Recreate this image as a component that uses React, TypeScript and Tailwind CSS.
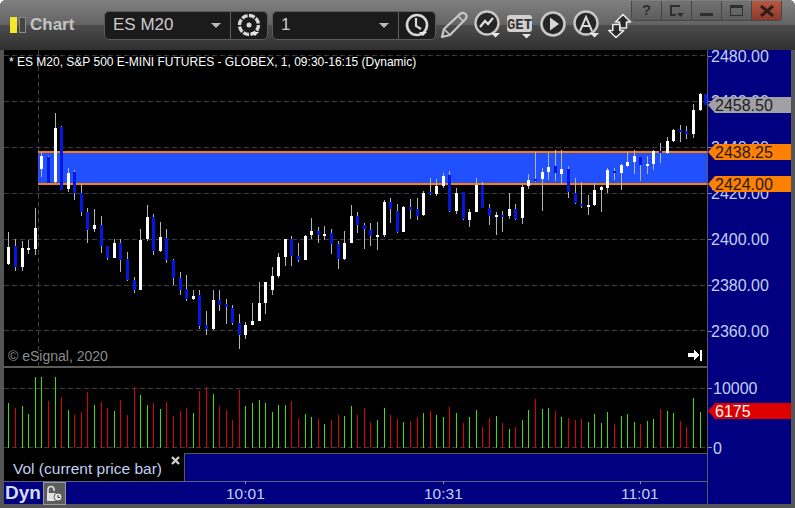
import type { ReactNode } from "react";

// candle rows read off the chart: x, wick top, body top, body bottom, wick bottom, white?
type Row = [number, number, number, number, number, number];

const left: Row[] = [
  [25,426,471,522,525,1],[46,447,468,531,543,0],[67,453,474,531,543,1],[85,450,474,480,492,1],[106,354,414,477,495,1],
  [124,186,198,237,261,1],[145,198,201,279,282,0],[166,69,114,276,279,1],[184,108,111,300,300,0],[205,234,249,297,306,1],
  [223,240,246,309,330,0],[244,282,309,366,378,0],[262,354,366,420,459,0],[283,357,405,417,426,1],[304,378,405,468,489,0],
  [322,468,468,504,510,0],[343,447,459,504,504,1],[361,447,459,510,546,0],[382,486,507,570,573,0],[403,561,570,600,609,0],
  [421,417,450,600,600,1],[442,345,381,447,453,1],[460,372,381,483,495,0],[481,396,441,483,486,1],[499,417,444,510,519,0],
  [520,507,510,564,585,0],[541,546,564,600,615,0],[559,555,597,627,633,0],[580,600,618,627,630,1],[598,600,615,708,717,0],
  [619,663,705,717,735,0],[640,600,630,717,720,1],[658,600,630,645,663,0],[679,627,642,651,702,0],[697,645,654,699,705,0],
  [718,672,699,735,777,0],[736,696,705,735,747,1],[757,639,693,705,705,1],[778,576,639,693,693,1],[796,576,576,639,672,1],
];

const middle: Row[] = [
  [7,531,558,600,615,1],[25,489,501,558,564,1],[46,447,447,501,528,1],[64,438,447,498,528,0],[85,459,498,510,516,0],
  [106,435,438,510,510,1],[124,384,423,435,447,1],[145,411,423,435,459,0],[163,408,432,438,450,1],[184,417,429,462,492,0],
  [205,453,462,507,537,0],[223,423,459,507,510,1],[244,345,378,459,459,1],[262,366,378,405,429,0],[283,399,405,417,477,0],
  [301,399,420,438,468,0],[322,396,435,441,480,1],[343,330,336,435,441,1],[361,324,336,357,399,0],[382,342,363,426,429,0],
  [400,348,351,426,426,1],[421,327,351,360,387,0],[442,324,357,378,390,0],[460,303,309,375,378,1],[481,264,306,312,315,0],
  [499,267,288,312,318,1],[520,249,258,288,294,1],[538,243,255,363,366,0],[559,294,309,363,372,1],[580,306,306,387,390,0],
  [598,357,366,390,411,1],[619,264,285,366,366,1],[637,276,285,354,354,0],[658,342,354,378,405,0],[679,366,375,381,435,1],
  [697,363,375,381,426,0],[718,309,357,378,387,1],[736,342,357,387,390,0],[757,285,291,384,402,1],[775,252,270,288,297,1],
  [796,186,267,273,276,0],
];

const right: Row[] = [
  [52,264,276,297,393,1],[70,219,261,276,300,1],[91,210,258,279,303,0],[109,210,267,282,312,1],[130,258,267,336,354,0],
  [151,294,339,369,372,0],[169,306,372,378,384,0],[190,345,375,381,405,1],[208,309,330,375,378,1],[229,318,321,330,396,1],
  [247,264,270,324,339,1],[268,264,273,279,300,0],[289,252,255,279,330,1],[307,216,246,258,261,1],[328,210,228,246,282,1],
  [346,231,231,255,303,0],[367,228,252,258,282,1],[385,210,213,252,270,1],[406,189,213,219,249,0],[427,171,183,219,222,1],
  [445,147,150,183,186,1],[466,135,150,156,186,0],[484,138,153,162,177,0],[505,72,90,162,174,1],[526,39,42,90,93,1],
  [541,42,42,75,75,0],
];

const candles = [
  ...left.map((r) => ({ r, ox: 0, oy: 90 })),
  ...middle.map((r) => ({ r, ox: 270, oy: 90 })),
  ...right.map((r) => ({ r, ox: 525, oy: 80 })),
];

// volume bars: x in zoom units, top, green?
const volLeft: [number, number, number][] = [
  [25,129,1],[46,144,0],[67,138,1],[85,162,1],[106,51,1],[124,51,1],[145,123,0],[166,51,1],[184,111,0],[205,150,1],
  [223,165,0],[244,156,0],[262,96,0],[283,135,1],[304,126,0],[322,144,0],[343,153,1],[361,120,0],[382,165,0],[403,81,0],
  [421,105,1],[442,135,1],[460,129,0],[481,147,1],[499,126,0],[520,168,0],[541,153,0],[559,144,0],[580,159,1],[598,93,0],
  [619,81,0],[640,102,1],[658,138,0],[679,150,0],[697,180,0],[718,90,0],[736,138,1],[757,129,1],[778,120,1],[796,129,1],
];
const volMiddle: [number, number, number][] = [
  [7,156,1],[25,135,1],[46,135,1],[64,123,0],[85,177,0],[106,162,1],[124,171,1],[145,177,0],[163,192,1],[184,180,0],
  [205,165,0],[223,168,1],[244,138,1],[262,165,0],[283,144,0],[301,186,0],[322,180,1],[343,144,1],[361,165,0],[382,177,0],
  [400,186,1],[421,183,0],[442,171,0],[460,159,1],[481,153,0],[499,165,1],[520,171,1],[538,141,0],[559,159,1],[580,189,0],
  [598,171,1],[619,150,1],[637,201,0],[658,174,0],[679,168,1],[697,189,0],[718,207,1],[736,201,0],[757,180,1],[775,150,1],
  [796,117,0],
];
const volRight: [number, number, number][] = [
  [52,207,1],[70,204,1],[91,213,0],[109,231,1],[130,234,0],[151,240,0],[169,237,0],[190,246,1],[208,222,1],[229,249,1],
  [247,216,1],[268,252,0],[289,228,1],[307,222,1],[328,246,1],[346,252,0],[367,243,1],[385,237,1],[406,207,0],[427,213,1],
  [445,219,1],[466,243,0],[484,261,0],[505,174,1],[526,216,1],
];

const volBars = [
  ...volLeft.map((v) => ({ x: Math.floor(v[0] / 3), top: 360 + v[1] / 3, up: v[2] })),
  ...volMiddle.map((v) => ({ x: Math.floor(270 + v[0] / 3), top: 360 + v[1] / 3, up: v[2] })),
  ...volRight.map((v) => ({ x: Math.floor(525 + v[0] / 3), top: 340 + v[1] / 3, up: v[2] })),
];

const gridY = [55, 101, 147, 193, 239, 285, 330];
const priceLabels = [
  { y: 56, text: "2480.00" },
  { y: 101, text: "2460.00" },
  { y: 147, text: "2440.00" },
  { y: 193, text: "2420.00" },
  { y: 239, text: "2400.00" },
  { y: 285, text: "2380.00" },
  { y: 331, text: "2360.00" },
];

function PriceChart() {
  return (
    <svg width="703" height="316" viewBox="4 50 703 316" shapeRendering="crispEdges" className="block bg-black">
      {gridY.map((y) => (
        <line key={y} x1="4" x2="707" y1={y + 0.5} y2={y + 0.5} stroke="#3c3c3c" strokeDasharray="5 3" />
      ))}
      <line x1="38.5" x2="38.5" y1="50" y2="366" stroke="#444" strokeDasharray="5 3" />
      <rect x="38" y="153" width="669" height="30" fill="#2150ff" />
      <rect x="38" y="151" width="669" height="2" fill="#ff8000" />
      <rect x="38" y="183" width="669" height="2" fill="#ff8000" />
      {candles.map(({ r, ox, oy }) => {
        const x = Math.floor(ox + r[0] / 3);
        const y = (v: number) => oy + v / 3;
        return (
          <g key={`${ox}-${r[0]}`}>
            <rect x={x} y={y(r[1])} width="1" height={(r[4] - r[1]) / 3} fill="#b4b4b4" />
            <rect x={x - 1} y={y(r[2])} width="3" height={(r[3] - r[2]) / 3} fill={r[5] ? "#ffffff" : "#0018e0"} />
          </g>
        );
      })}
      <g fill="#fff">
        <path d="M688 353h6v-3l5 5-5 5v-3h-6z" />
        <rect x="700" y="350" width="2" height="11" />
      </g>
    </svg>
  );
}

function VolumeChart() {
  return (
    <svg width="703" height="85" viewBox="4 368 703 85" shapeRendering="crispEdges" className="block bg-black">
      <line x1="4" x2="707" y1="388.5" y2="388.5" stroke="#3c3c3c" strokeDasharray="5 3" />
      <line x1="4" x2="707" y1="447.5" y2="447.5" stroke="#3c3c3c" strokeDasharray="5 3" />
      {volBars.map((b) => (
        <rect key={b.x} x={b.x} y={b.top} width="1" height={447.5 - b.top} fill={b.up ? "#44dd00" : "#dd0000"} />
      ))}
    </svg>
  );
}

function PriceTag({ top, text, tone }: { top: string; text: string; tone: string }) {
  return (
    <div
      className={`absolute left-0 right-0 h-4 pl-[7px] text-[16px] leading-[17px] [clip-path:polygon(0_50%,7px_0,100%_0,100%_100%,7px_100%)] ${top} ${tone}`}
    >
      {text}
    </div>
  );
}

function Round({ children, className }: { children: ReactNode; className: string }) {
  return (
    <svg width="30" height="30" viewBox="0 0 30 30" fill="none" className={`shrink-0 ${className}`}>
      {children}
    </svg>
  );
}

const caret = <path d="M18 23h9l-4.5 4.5z" fill="#e8e8e8" />;

function WinButton({ children, red }: { children: ReactNode; red?: boolean }) {
  return (
    <div
      className={`flex h-[20px] w-[30px] items-center justify-center border-r border-b border-[#454545] ${
        red ? "bg-gradient-to-b from-[#b9563f] to-[#8a3c2c]" : "bg-gradient-to-b from-[#727272] to-[#5c5c5c]"
      }`}
    >
      {children}
    </div>
  );
}

function Toolbar() {
  return (
    <div className="flex h-[50px] items-center bg-[linear-gradient(#808080_0,#636363_25px,#4c4c4c_25px,#303030_50px)]">
      <div className="ml-[10px] h-4 w-[7px] bg-[#f5e82a]" />
      <div className="ml-[2px] h-4 w-[7px] border border-[#8a8a8a] bg-[#444]" />
      <span className="ml-[4px] w-[74px] text-[17px] font-bold text-[#c4c4c4]">Chart</span>

      <div className="flex h-[29px] w-[164px] items-center rounded-[5px] border border-[#5c5c5c] bg-[#1b1b1b]">
        <span className="ml-2 flex-1 text-[17px] text-[#cccccc]">ES M20</span>
        <span className="mr-[9px] h-0 w-0 border-x-[5px] border-t-[5px] border-x-transparent border-t-[#bbb]" />
        <div className="flex h-full w-[37px] items-center justify-center border-l border-[#5c5c5c]">
          <svg width="26" height="26" viewBox="0 0 26 26" fill="none">
            <circle cx="13" cy="13" r="9.5" stroke="#d8d8d8" strokeWidth="3.4" strokeDasharray="6 1.4" />
            <circle cx="13" cy="13" r="2.5" fill="#d8d8d8" />
            <path d="M15 20h8l-4 4z" fill="#e8e8e8" />
          </svg>
        </div>
      </div>

      <div className="ml-[4px] flex h-[29px] w-[164px] items-center rounded-[5px] border border-[#5c5c5c] bg-[#1b1b1b]">
        <span className="ml-2 flex-1 text-[17px] text-[#cccccc]">1</span>
        <span className="mr-[9px] h-0 w-0 border-x-[5px] border-t-[5px] border-x-transparent border-t-[#bbb]" />
        <div className="flex h-full w-[37px] items-center justify-center border-l border-[#5c5c5c]">
          <svg width="26" height="26" viewBox="0 0 26 26" fill="none">
            <circle cx="13" cy="13" r="10" stroke="#d8d8d8" strokeWidth="2.6" />
            <path d="M12 6v8l5 3" stroke="#d8d8d8" strokeWidth="2.2" />
            <path d="M15 20h8l-4 4z" fill="#e8e8e8" />
          </svg>
        </div>
      </div>

      <svg width="28" height="30" viewBox="0 0 28 30" fill="none" className="ml-[4px] shrink-0">
        <path d="M2 27l2-8L20 4c2-1.5 4-1.5 5.500 0s1.500 3 0 5L10 25z" stroke="#c8c8c8" strokeWidth="2.2" strokeLinejoin="round" />
        <path d="M18 6l6 6M4 19l6 6" stroke="#c8c8c8" strokeWidth="1.6" />
      </svg>
      <Round className="ml-[5px]">
        <circle cx="14" cy="13" r="11.5" stroke="#c8c8c8" strokeWidth="2.4" fill="#262626" />
        <path d="M7 17l5-6 3 3 5-6" stroke="#e0e0e0" strokeWidth="2.2" />
        {caret}
      </Round>
      <svg width="30" height="30" viewBox="0 0 30 30" className="ml-[4px] shrink-0">
        <rect x="0" y="5" width="25" height="17" rx="3" fill="#d0d0d0" />
        <text x="12.5" y="19" textAnchor="middle" fontFamily="'Liberation Mono', monospace" fontWeight="700" fontSize="14" fill="#333">GET</text>
        <path d="M15 24h9l-4.5 4.5z" fill="#e8e8e8" />
      </svg>
      <Round className="ml-[2px]">
        <circle cx="14" cy="14" r="11.5" stroke="#c8c8c8" strokeWidth="2.6" fill="#262626" />
        <path d="M11 7.5l9 6.500-9 6.500z" fill="#d8d8d8" />
      </Round>
      <Round className="ml-[3px]">
        <circle cx="14" cy="13" r="11.5" stroke="#c8c8c8" strokeWidth="2.4" fill="#262626" />
        <path d="M8 21l6-14 6 14M10.5 16h7" stroke="#d8d8d8" strokeWidth="2" />
        {caret}
      </Round>
      <svg width="24" height="26" viewBox="0 0 24 26" className="ml-[6px] mt-[1px] shrink-0">
        <path d="M15 1.500l7.500 7.500h-4v6h-7v-6h-4z" fill="#2a2a2a" stroke="#e8e8e8" strokeWidth="1.6" strokeLinejoin="round" />
        <path d="M8 24.500L0.800 17.500h4v-6h7v6h4z" fill="#2a2a2a" stroke="#e8e8e8" strokeWidth="1.6" strokeLinejoin="round" />
      </svg>

      <div className="-ml-px mb-[28px] flex overflow-hidden rounded-b-[4px] border-l border-[#454545]">
        <WinButton>
          <span className="text-[15px] font-bold text-[#2e2e2e]">?</span>
        </WinButton>
        <WinButton>
          <svg width="14" height="14" viewBox="0 0 14 14" fill="none">
            <path d="M10 2H1v9h5" stroke="#2e2e2e" strokeWidth="2" />
            <path d="M7 9h7l-3.5 4z" fill="#2e2e2e" />
          </svg>
        </WinButton>
        <WinButton>
          <span className="mt-[8px] h-[3px] w-[13px] bg-[#2e2e2e]" />
        </WinButton>
        <WinButton>
          <span className="h-[11px] w-[13px] border border-t-[3px] border-[#2e2e2e]" />
        </WinButton>
        <WinButton red>
          <svg width="14" height="12" viewBox="0 0 14 12">
            <path d="M1 1l12 10M13 1L1 11" stroke="#2e1c18" strokeWidth="3" />
          </svg>
        </WinButton>
      </div>
    </div>
  );
}

function Axis() {
  return (
    <div className="relative w-[84px] border-l border-[#5a5a5a] bg-[#000080] text-[16px] leading-4 text-[#c0d0f4]">
      {priceLabels.map((l) => (
        <div key={l.text}>
          <span className="absolute left-0 h-px w-[4px] bg-[#8a8a8a]" style={{ top: l.y - 50 }} />
          <span className="absolute left-[3px]" style={{ top: l.y - 57 }}>
            {l.text}
          </span>
        </div>
      ))}
      <PriceTag top="top-[47px]" text="2458.50" tone="bg-[#a0a0a6] text-[#1c1c1c]" />
      <PriceTag top="top-[94px]" text="2438.25" tone="bg-[#ff8000] text-[#1c1c1c]" />
      <PriceTag top="top-[126px]" text="2424.00" tone="bg-[#ff8000] text-[#1c1c1c]" />

      <span className="absolute top-[338px] left-0 h-px w-[4px] bg-[#8a8a8a]" />
      <span className="absolute top-[331px] left-[5px]">10000</span>
      <PriceTag top="top-[353px]" text="6175" tone="bg-[#dd0000] text-white" />
      <span className="absolute top-[397px] left-0 h-px w-[4px] bg-[#8a8a8a]" />
      <span className="absolute top-[391px] left-[5px]">0</span>
    </div>
  );
}

export default function App() {
  return (
    <div className="flex h-[508px] w-[795px] flex-col overflow-hidden rounded-t-[6px] bg-[#555] font-['Liberation_Sans',Arial,sans-serif]">
      <Toolbar />
      <div className="flex h-[454px] px-[4px]">
        <div className="flex w-[703px] flex-col">
          <div className="relative h-[316px]">
            <PriceChart />
            <span className="absolute top-[5px] left-[5px] text-[12px] leading-[14px] text-white">
              * ES M20, S&amp;P 500 E-MINI FUTURES - GLOBEX, 1, 09:30-16:15 (Dynamic)
            </span>
            <span className="absolute top-[298px] left-[4px] text-[14px] leading-4 text-[#8c8c8c]">© eSignal, 2020</span>
          </div>
          <div className="h-[2px] bg-[#5a5a5a]" />
          <VolumeChart />
          <div className="flex h-[28px]">
            <div className="relative w-[180px] bg-black pl-[9px] text-[15.5px] leading-[31px] text-[#c0d0f4]">
              Vol (current price bar)
              <svg width="9" height="9" viewBox="0 0 9 9" className="absolute top-[3px] right-[4px]">
                <path d="M1 1l7 7M8 1L1 8" stroke="#d0d0d0" strokeWidth="2.4" />
              </svg>
            </div>
            <div className="flex-1 border-t border-l border-[#5a5a5a] bg-[#000080]" />
          </div>
          <div className="relative flex h-[23px] items-center border-t border-[#5a6080] bg-[#000080] text-[15.5px] text-[#c0d0f4]">
            <span className="ml-[1px] text-[19px] font-bold text-[#d4dcf8]">Dyn</span>
            <div className="ml-[2px] flex h-[23px] w-[23px] items-center justify-center border border-[#9a9a9a] bg-[#5c5c5c]">
              <svg width="17" height="17" viewBox="0 0 17 17" fill="none">
                <path d="M2 8V4.500a3 3 0 0 1 6 0V6" stroke="#e0e0e0" strokeWidth="1.6" />
                <rect x="1" y="8" width="9" height="8" fill="#e0e0e0" />
                <circle cx="12" cy="12" r="4" fill="#e8e8e8" stroke="#5c5c5c" />
                <path d="M12 10v2.500h2" stroke="#333" strokeWidth="1" />
              </svg>
            </div>
            <span className="absolute -top-[1px] left-[241px] h-[3px] w-px bg-[#8a8a8a]" />
            <span className="absolute left-[222px] top-[2px] leading-5">10:01</span>
            <span className="absolute -top-[1px] left-[439px] h-[3px] w-px bg-[#8a8a8a]" />
            <span className="absolute left-[420px] top-[2px] leading-5">10:31</span>
            <span className="absolute -top-[1px] left-[636px] h-[3px] w-px bg-[#8a8a8a]" />
            <span className="absolute left-[617px] top-[2px] leading-5">11:01</span>
          </div>
        </div>
        <Axis />
      </div>
    </div>
  );
}
